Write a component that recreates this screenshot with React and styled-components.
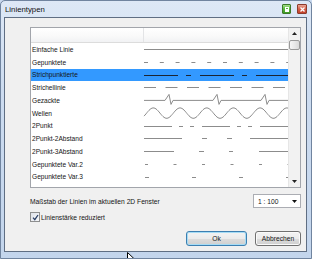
import React from "react";
import styled, { createGlobalStyle } from "styled-components";

const GlobalStyle = createGlobalStyle`
  html, body {
    margin: 0;
    padding: 0;
    background: #c9d9ee;
  }
  body {
    font-family: "Liberation Sans", Arial, sans-serif;
  }
`;

const LINES = [
  { name: "Einfache Linie", dash: "none" },
  { name: "Gepunktete", dash: "4 11.8" },
  { name: "Strichpunktierte", dash: "34 8 5 9" },
  { name: "Strichellinie", dash: "12 9.5" },
  { name: "Gezackte", kind: "zigzag" },
  { name: "Wellen", kind: "wave" },
  { name: "2Punkt", dash: "28 7 4 7 4 8" },
  { name: "2Punkt-2Abstand", dash: "38 20 5 20 5 18" },
  { name: "2Punkt-3Abstand", dash: "30 25 5 25 4 26" },
  { name: "Gepunktete Var.2", dash: "3 25.5", offset: -1 },
  { name: "Gepunktete Var.3", dash: "4 43", offset: -1 },
];

const ROW_H = 12.75;
const LINE_W = 145;

const wavePath = () => {
  let d = "";
  for (let x = 0; x <= LINE_W; x += 1) {
    const y = 6.1 - 5.2 * Math.cos((2 * Math.PI * (x + 144 - 153.3)) / 26.7);
    d += (x === 0 ? "M" : "L") + x + " " + y.toFixed(2) + " ";
  }
  return d;
};

const zigzagPath = () => {
  const m = 6.4;
  let d = `M0 ${m}`;
  [21, 69, 117].forEach((x) => {
    d += ` L${x} ${m} L${x + 4} ${m - 6} L${x + 6} ${m + 4} L${x + 8} ${m}`;
  });
  return d + ` L${LINE_W} ${m}`;
};

const LinePattern = ({ line, selected }) => {
  const color = selected ? "#1b2533" : "#8c8c8c";
  return (
    <svg width={LINE_W} height={ROW_H} style={{ display: "block", overflow: "visible" }}>
      {line.kind === "wave" && <path d={wavePath()} fill="none" stroke={color} strokeWidth="1" />}
      {line.kind === "zigzag" && <path d={zigzagPath()} fill="none" stroke={color} strokeWidth="1" />}
      {!line.kind && (
        <line
          x1="0"
          x2={LINE_W}
          y1="6.5"
          y2="6.5"
          stroke={color}
          strokeWidth="1"
          strokeDasharray={line.dash}
          strokeDashoffset={line.offset || 0}
        />
      )}
    </svg>
  );
};

const Window = styled.div`
  position: relative;
  width: 312px;
  height: 259px;
  box-sizing: border-box;
  display: flex;
  flex-direction: column;
  overflow: hidden;
  background: linear-gradient(180deg, #dde8f6 0%, #cddcf0 35%, #c3d5ec 100%);
  border: 1px solid #70849f;
  border-radius: 5px 5px 0 0;
  padding: 0 4px 6px 3px;
`;

const TitleBar = styled.div`
  height: 16px;
  display: flex;
  align-items: center;
  justify-content: space-between;
  padding-left: 1px;
`;

const Title = styled.span`
  font-size: 7.8px;
  color: #111;
`;

const TitleButtons = styled.div`
  display: flex;
  gap: 6px;
  align-items: center;
`;

const CapButton = styled.div`
  width: ${(p) => p.$w}px;
  height: 10px;
  box-sizing: border-box;
  border-radius: 1px;
  border: 1px solid ${(p) => (p.$red ? "#8d3b2c" : "#3d7a2a")};
  background: ${(p) =>
    p.$red
      ? "linear-gradient(180deg, #e9a595 0%, #d5604a 50%, #c2412a 100%)"
      : "linear-gradient(180deg, #a4e08a 0%, #58b63c 50%, #3c9a25 100%)"};
  display: flex;
  align-items: center;
  justify-content: center;
`;

const Content = styled.div`
  flex: 1;
  display: flex;
  flex-direction: column;
  background: #f0f0f0;
  border: 1px solid #5f6e83;
  padding: 9px 5px 0 25px;
`;

const ListBox = styled.div`
  height: 161px;
  box-sizing: border-box;
  display: flex;
  background: #fff;
  border: 1px solid #a2a5ab;
`;

const ListMain = styled.div`
  flex: 1;
  display: flex;
  flex-direction: column;
  overflow: hidden;
`;

const Header = styled.div`
  height: 15px;
  box-sizing: border-box;
  display: flex;
  border-bottom: 1px solid #dcdcdc;
  background: linear-gradient(180deg, #ffffff 0%, #f9f9f9 60%, #f1f2f4 100%);
`;

const HeaderCell = styled.div`
  width: ${(p) => (p.$first ? "112px" : "auto")};
  flex: ${(p) => (p.$first ? "none" : 1)};
  border-right: ${(p) => (p.$first ? "1px solid #e3e4e6" : "none")};
`;

const Row = styled.div`
  height: ${ROW_H}px;
  display: flex;
  align-items: center;
  background: ${(p) => (p.$selected ? "#3399ff" : "transparent")};
`;

const NameCell = styled.div`
  width: 112px;
  flex: none;
  padding-left: 1px;
  font-size: 6.6px;
  color: #151515;
  white-space: nowrap;
`;

const Scrollbar = styled.div`
  width: 11px;
  flex: none;
  display: flex;
  flex-direction: column;
  background: #f2f2f2;
  border-left: 1px solid #e6e6e6;
`;

const ScrollArrow = styled.div`
  height: 11px;
  display: flex;
  align-items: center;
  justify-content: center;
  margin-top: ${(p) => (p.$down ? "auto" : "0")};
`;

const Thumb = styled.div`
  height: 10px;
  margin: 1px 0 0 0;
  box-sizing: border-box;
  border: 1px solid #9a9a9a;
  border-radius: 2px;
  background: linear-gradient(90deg, #f6f6f6 0%, #e9e9e9 50%, #dadada 100%);
`;

const OptionsRow = styled.div`
  margin-top: 6px;
  height: 14px;
  display: flex;
  align-items: center;
  justify-content: space-between;
`;

const Label = styled.span`
  font-size: 6.7px;
  color: #151515;
  white-space: nowrap;
`;

const Select = styled.div`
  width: 48px;
  height: 14px;
  box-sizing: border-box;
  display: flex;
  align-items: center;
  justify-content: space-between;
  padding: 0 3px 0 4px;
  background: #fff;
  border: 1px solid #abadb3;
  font-size: 6.7px;
  color: #151515;
`;

const CheckRow = styled.div`
  margin-top: 4px;
  height: 10px;
  display: flex;
  align-items: center;
  gap: 1px;
`;

const CheckBox = styled.div`
  width: 10px;
  height: 10px;
  box-sizing: border-box;
  border: 1px solid #8e8f8f;
  background: linear-gradient(135deg, #dfe3ea 0%, #f6f7f9 100%);
  display: flex;
  align-items: center;
  justify-content: center;
`;

const ButtonRow = styled.div`
  margin-top: 9px;
  display: flex;
  justify-content: flex-end;
  gap: 8px;
`;

const Button = styled.div`
  width: ${(p) => p.$w}px;
  height: 15px;
  box-sizing: border-box;
  display: flex;
  align-items: center;
  justify-content: center;
  font-size: 6.7px;
  color: #151515;
  border-radius: 3px;
  border: 1px solid ${(p) => (p.$default ? "#3c7fb1" : "#707070")};
  box-shadow: ${(p) => (p.$default ? "inset 0 0 0 1px #a6dcf5" : "inset 0 0 0 1px #fafafa")};
  background: linear-gradient(180deg, #f3f3f3 0%, #ebebeb 50%, #dddddd 51%, #cfcfcf 100%);
`;

const Cursor = styled.svg`
  position: absolute;
  left: 126px;
  top: 251px;
`;

export default function App() {
  return (
    <>
      <GlobalStyle />
      <Window>
        <TitleBar>
          <Title>Linientypen</Title>
          <TitleButtons>
            <CapButton $w={9}>
              <svg width="4" height="5" viewBox="0 0 4 5">
                <rect x="0" y="0" width="4" height="5" fill="#fff" />
                <rect x="1" y="1" width="2" height="1" fill="#58b63c" />
              </svg>
            </CapButton>
            <CapButton $w={10} $red>
              <svg width="5" height="5" viewBox="0 0 5 5">
                <path d="M0.5 0.5 L4.5 4.5 M4.5 0.5 L0.5 4.5" stroke="#fff" strokeWidth="1.3" />
              </svg>
            </CapButton>
          </TitleButtons>
        </TitleBar>
        <Content>
          <ListBox>
            <ListMain>
              <Header>
                <HeaderCell $first />
                <HeaderCell />
              </Header>
              {LINES.map((line, i) => (
                <Row key={line.name} $selected={i === 2}>
                  <NameCell>{line.name}</NameCell>
                  <LinePattern line={line} selected={i === 2} />
                </Row>
              ))}
            </ListMain>
            <Scrollbar>
              <ScrollArrow>
                <svg width="5" height="3" viewBox="0 0 5 3">
                  <path d="M0 3 L2.5 0 L5 3 Z" fill="#222" />
                </svg>
              </ScrollArrow>
              <Thumb />
              <ScrollArrow $down>
                <svg width="5" height="3" viewBox="0 0 5 3">
                  <path d="M0 0 L2.5 3 L5 0 Z" fill="#222" />
                </svg>
              </ScrollArrow>
            </Scrollbar>
          </ListBox>
          <OptionsRow>
            <Label>Maßstab der Linien im aktuellen 2D Fenster</Label>
            <Select>
              <span>1 : 100</span>
              <svg width="5" height="3" viewBox="0 0 5 3">
                <path d="M0 0 L2.5 3 L5 0 Z" fill="#111" />
              </svg>
            </Select>
          </OptionsRow>
          <CheckRow>
            <CheckBox>
              <svg width="7" height="7" viewBox="0 0 7 7">
                <path d="M1 3.6 L2.8 5.6 L6 1" fill="none" stroke="#2a3f66" strokeWidth="1.3" />
              </svg>
            </CheckBox>
            <Label>Linienstärke reduziert</Label>
          </CheckRow>
          <ButtonRow>
            <Button $w={61} $default>Ok</Button>
            <Button $w={46}>Abbrechen</Button>
          </ButtonRow>
        </Content>
        <Cursor width="8" height="12" viewBox="0 0 8 12">
          <path d="M0.5 0.5 L0.5 10 L3 7.6 L4.8 11.5 L6.2 10.9 L4.4 7.1 L7.5 7.1 Z" fill="#fff" stroke="#000" strokeWidth="1" />
        </Cursor>
      </Window>
    </>
  );
}
